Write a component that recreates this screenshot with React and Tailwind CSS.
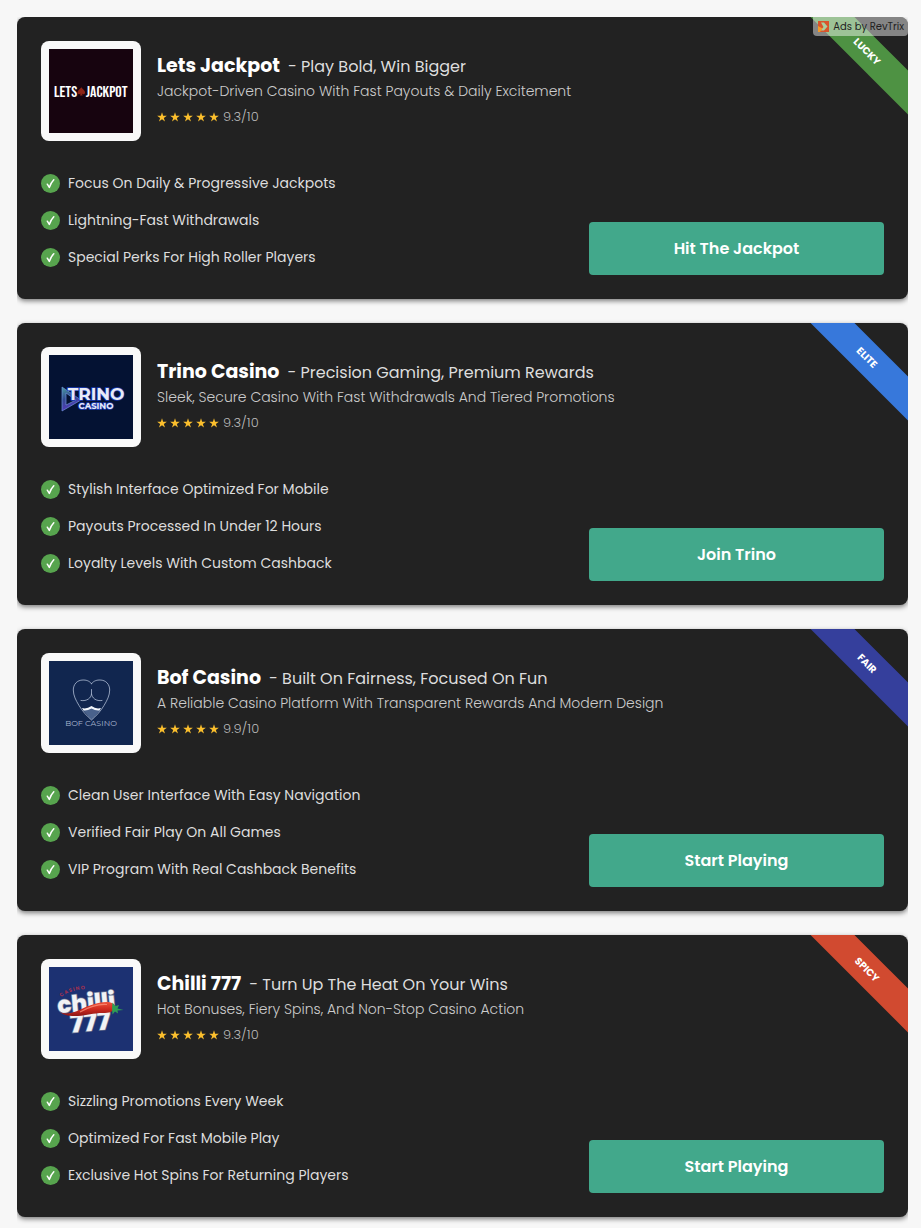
import clsx from "clsx";

const LetsJackpotLogo = () => (
  <svg viewBox="0 0 84 84" className="block w-full" role="img">
    <rect width="84" height="84" fill="#17040f" />
    <g
      fill="#ffffff"
      fontFamily="'Bebas Neue', Oswald, 'Roboto Condensed', sans-serif"
      fontSize="16"
    >
      <text x="5" y="48">
        LETS
      </text>
      <text x="78.500" y="48" textAnchor="end">
        JACKPOT
      </text>
    </g>
    <path
      d="M32.3 38.2c1 1.900 3.800 3.100 3.800 5.200 0 1.800-2 2.300-3.200 1.200l.8 1.800h-2.800l.8-1.800c-1.200 1.100-3.200.6-3.200-1.200 0-2.100 2.800-3.300 3.800-5.200z"
      fill="#8c2417"
    />
  </svg>
);

const TrinoLogo = () => (
  <svg viewBox="0 0 84 84" className="block w-full" role="img">
    <defs>
      <linearGradient id="trino-play" x1="0" y1="0" x2="0.3" y2="1">
        <stop offset="0" stopColor="#58b8b4" />
        <stop offset="0.5" stopColor="#39549f" />
        <stop offset="1" stopColor="#6840d8" />
      </linearGradient>
    </defs>
    <rect width="84" height="84" fill="#041233" />
    <path
      d="M13 32v24L32 45z M17 38v12l10-5z"
      fill="url(#trino-play)"
      fillRule="evenodd"
      opacity="0.85"
    />
    <path
      d="M13 32v24L32 45z M17 38v12l10-5z"
      fill="none"
      stroke="#6f8fd8"
      strokeWidth="0.7"
    />
    <g
      fill="#e9ebf5"
      stroke="#1c3bb4"
      strokeWidth="1.6"
      paintOrder="stroke"
      fontFamily="Montserrat, Poppins, sans-serif"
      fontWeight="700"
    >
      <text x="47" y="45" textAnchor="middle" fontSize="17">
        TRINO
      </text>
      <text x="47" y="53.8" textAnchor="middle" fontSize="8.500">
        CASINO
      </text>
    </g>
  </svg>
);

const BofLogo = () => (
  <svg viewBox="0 0 84 84" className="block w-full" role="img">
    <rect width="84" height="84" fill="#11264f" />
    <path d="M33.5 48.5q4 .5 9-3 5 3.500 9.500 3L42.500 59z" fill="#4a628c" />
    <path
      d="M33 47q4.500 1.500 9.500-2 4.500 3.500 9.500 2l-1.500 2.500q-4 .5-8-2-4 2.500-8 2z"
      fill="#f2f6fb"
    />
    <g fill="none" stroke="#aebdd4" strokeWidth="0.8" strokeLinecap="round">
      <path d="M42.500 22.700C40 19.300 36.500 19 34 19c-6 0-9.700 4.500-9.700 10 0 5.500 2.700 10.500 5.700 15.500C33.500 50.500 38 55 42.500 59c4.500-4 9-8.500 12.500-14.500 3-5 5.700-10 5.700-15.500 0-5.500-3.700-10-9.700-10-2.500 0-6 .3-8.500 3.700z" />
      <path d="M42.500 28.500v4.500c-.5 4-4.500 7.500-10.500 6.500M42.500 33c.5 4 4.500 7.500 10.500 6.500" />
    </g>
    <text
      x="42"
      y="65"
      textAnchor="middle"
      fill="#a9b7cf"
      fontFamily="Montserrat, Poppins, sans-serif"
      fontSize="8"
    >
      BOF CASINO
    </text>
  </svg>
);

const ChilliLogo = () => (
  <svg viewBox="0 0 84 84" className="block w-full" role="img">
    <defs>
      <path id="chilli-arc" d="M12 30Q22 22 42 22" />
      <linearGradient id="chilli-red" x1="0" y1="0" x2="0" y2="1">
        <stop offset="0" stopColor="#f0553c" />
        <stop offset="0.5" stopColor="#cf2a1f" />
        <stop offset="1" stopColor="#8e1614" />
      </linearGradient>
    </defs>
    <rect width="84" height="84" fill="#1c3172" />
    <text
      fill="#b8304a"
      fontFamily="Poppins, sans-serif"
      fontWeight="600"
      fontSize="5"
    >
      <textPath href="#chilli-arc">C A S I N O</textPath>
    </text>
    <g
      fontFamily="Poppins, sans-serif"
      fontWeight="800"
      stroke="#67718e"
      strokeWidth="1.5"
      paintOrder="stroke"
      fill="#f1f2f5"
      transform="rotate(-5 40 44)"
    >
      <text x="38" y="43.500" textAnchor="middle" fontSize="23">
        chilli
      </text>
      <text x="40.500" y="64" textAnchor="middle" fontSize="26">
        777
      </text>
    </g>
    <path
      d="M10.500 44c3.500 3.500 9.500 3 16.500.5 10-4.500 20-10 32-9.500 5 .5 7 3 6.500 6-1 4-5.500 5-11.500 5-10 0-16 2.500-25 3-9 .5-16-1-18.500-5z"
      fill="url(#chilli-red)"
    />
    <path
      d="M31 45c8-4.500 17-8.500 27-7.500"
      fill="none"
      stroke="#ff9a80"
      strokeWidth="1.2"
      opacity="0.7"
    />
    <path
      d="M63.500 35.500l3 3.500 3.500-1-1.500 3.500 6 1.500-6 .5.500 3-3-2-2.500 3-.5-6z"
      fill="#2f9e54"
    />
  </svg>
);

const CASINOS = [
  {
    name: "Lets Jackpot",
    tagline: "Play Bold, Win Bigger",
    description: "Jackpot-Driven Casino With Fast Payouts & Daily Excitement",
    rating: "9.3/10",
    features: [
      "Focus On Daily & Progressive Jackpots",
      "Lightning-Fast Withdrawals",
      "Special Perks For High Roller Players",
    ],
    cta: "Hit The Jackpot",
    ribbon: "LUCKY",
    ribbonColor: "bg-[#4e9243]",
    Logo: LetsJackpotLogo,
  },
  {
    name: "Trino Casino",
    tagline: "Precision Gaming, Premium Rewards",
    description: "Sleek, Secure Casino With Fast Withdrawals And Tiered Promotions",
    rating: "9.3/10",
    features: [
      "Stylish Interface Optimized For Mobile",
      "Payouts Processed In Under 12 Hours",
      "Loyalty Levels With Custom Cashback",
    ],
    cta: "Join Trino",
    ribbon: "ELITE",
    ribbonColor: "bg-[#3778db]",
    Logo: TrinoLogo,
  },
  {
    name: "Bof Casino",
    tagline: "Built On Fairness, Focused On Fun",
    description:
      "A Reliable Casino Platform With Transparent Rewards And Modern Design",
    rating: "9.9/10",
    features: [
      "Clean User Interface With Easy Navigation",
      "Verified Fair Play On All Games",
      "VIP Program With Real Cashback Benefits",
    ],
    cta: "Start Playing",
    ribbon: "FAIR",
    ribbonColor: "bg-[#353f9c]",
    Logo: BofLogo,
  },
  {
    name: "Chilli 777",
    tagline: "Turn Up The Heat On Your Wins",
    description: "Hot Bonuses, Fiery Spins, And Non-Stop Casino Action",
    rating: "9.3/10",
    features: [
      "Sizzling Promotions Every Week",
      "Optimized For Fast Mobile Play",
      "Exclusive Hot Spins For Returning Players",
    ],
    cta: "Start Playing",
    ribbon: "SPICY",
    ribbonColor: "bg-[#d14a30]",
    Logo: ChilliLogo,
  },
];

const Stars = () => (
  <span className="flex gap-[3px]">
    {[0, 1, 2, 3, 4].map((s) => (
      <svg key={s} viewBox="0 0 20 20" className="size-[10px]" fill="#fbbf2d">
        <path d="M10 .5l2.300 7h7.400l-6 4.300 2.300 7.200-6-4.400-6 4.400 2.300-7.200-6-4.300h7.400z" />
      </svg>
    ))}
  </span>
);

const CheckIcon = () => (
  <svg viewBox="0 0 19 19" className="size-[19px] shrink-0">
    <circle cx="9.500" cy="9.500" r="9.500" fill="#57a44e" />
    <path
      d="M6.300 10.200l2 3.200c1-3 2.300-5.500 4.500-7.700"
      fill="none"
      stroke="#ffffff"
      strokeWidth="1.500"
      strokeLinecap="round"
      strokeLinejoin="round"
    />
  </svg>
);

const AdsBadge = () => (
  <a
    href="#ads"
    className="absolute top-0 right-0 flex items-center gap-1 h-[19px] pr-1 pl-[5px] bg-white/45 rounded-tr-lg rounded-bl-sm rounded-br-sm text-[10px] text-[#222222]"
  >
    <svg viewBox="0 0 11 11" className="size-[11px]">
      <rect width="11" height="11" fill="#d9542b" />
      <path d="M3 1.500h3l3.500 4L6 9.500H2.500L5.500 6z" fill="#a9cfa0" />
      <path d="M0 5l4.500 2.500L2 11H0z" fill="#f59a28" />
    </svg>
    Ads by RevTrix
  </a>
);

const CasinoCard = ({ casino, showAds }) => {
  const { Logo } = casino;

  return (
    <article className="relative rounded-lg bg-[#222222] p-6 shadow-[0_2px_5px_rgba(0,0,0,0.5)]">
      {/* clips the ribbon to the rounded corner */}
      <div className="pointer-events-none absolute inset-0 overflow-hidden rounded-lg">
        <div
          className={clsx(
            "absolute top-[19px] -right-[34px] flex h-[31px] w-[150px] rotate-45 items-center justify-center text-[10px] font-bold text-white",
            casino.ribbonColor
          )}
        >
          {casino.ribbon}
        </div>
      </div>
      {showAds && <AdsBadge />}

      <header className="flex gap-4">
        <div className="size-[100px] shrink-0 rounded-lg bg-[#f9f9f9] p-2">
          <Logo />
        </div>
        <div className="pt-3">
          <h2 className="flex h-[25px] items-baseline gap-2 text-[19px] leading-[25px] font-bold text-white">
            {casino.name}
            <span className="text-base leading-[25px] font-normal text-[#dddddd]">
              - {casino.tagline}
            </span>
          </h2>
          <p className="text-sm leading-[26px] font-light text-[#cccccc]">
            {casino.description}
          </p>
          <div className="flex items-center gap-1 text-[13px] leading-[26px] font-light text-[#bbbbbb]">
            <Stars />
            {casino.rating}
          </div>
        </div>
      </header>

      <div className="mt-6 grid grid-cols-[13fr_7fr] items-end">
        <ul className="flex flex-col gap-px">
          {casino.features.map((feature) => (
            <li
              key={feature}
              className="flex h-9 items-center gap-2 text-sm text-[#dddddd]"
            >
              <CheckIcon />
              {feature}
            </li>
          ))}
        </ul>
        <a
          href="#play"
          className="flex h-[53px] items-center justify-center rounded bg-[#42a88b] text-base font-semibold text-white"
        >
          {casino.cta}
        </a>
      </div>
    </article>
  );
};

export default function App() {
  return (
    <main className="min-h-screen bg-[#f7f7f7] pt-[17px] pr-[13px] pl-[17px] font-['Poppins','Inter',sans-serif]">
      <div className="flex flex-col gap-6 overflow-hidden pb-[10px]">
        {CASINOS.map((casino, index) => (
          <CasinoCard
            key={casino.name}
            casino={casino}
            showAds={index === 0}
          />
        ))}
      </div>
    </main>
  );
}
